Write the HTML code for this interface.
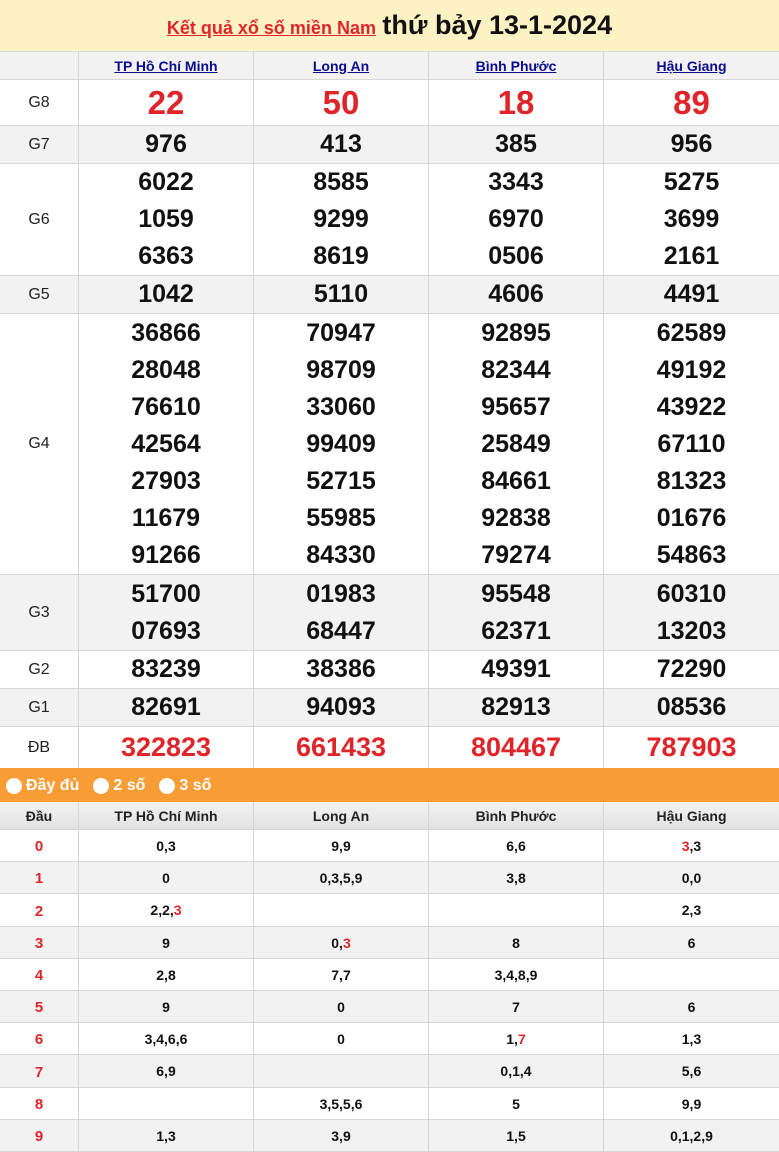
<!DOCTYPE html>
<html><head><meta charset="utf-8"><style>
*{margin:0;padding:0;box-sizing:border-box}
body{width:779px;height:1152px;overflow:hidden;background:#fff;font-family:"Liberation Sans",Arial,sans-serif}
.hd{height:52px;background:#fdf2c4;text-align:center;line-height:50px;border-bottom:1px solid #ddd}
.hd a{color:#e0252a;font-size:18px;font-weight:bold;text-decoration:underline}
.hd b{font-size:27px;color:#111;margin-left:2px}
.r{display:flex;border-bottom:1px solid #d6d6d6}
.r>div{border-right:1px solid #d6d6d6;text-align:center;display:flex;flex-direction:column;justify-content:center}
.r>div:last-child{border-right:none}
.c0{width:79px}.c1{width:175px}.c2{width:175px}.c3{width:175px}.c4{width:175px}
.g{background:#f2f2f2}
.lb{font-size:16px;color:#222}
.n{font-size:25px;font-weight:bold;color:#111;line-height:37px}
.red{color:#e0252a}
.h a{color:#0b0b8e;font-size:14px;font-weight:bold;text-decoration:underline}
.bar{height:34px;background:#f89c35;display:flex;align-items:center;padding-left:6px;color:#fff;font-weight:bold;font-size:16px;padding-top:2px}
.bar span{display:inline-block;width:16px;height:16px;border-radius:50%;background:#fff;margin-right:4px;vertical-align:-3px}
.bar i{font-style:normal;margin-right:14px}
.lh{background:linear-gradient(#f3f3f3,#e2e2e2);font-weight:bold;font-size:14px;color:#222}
.l{font-size:14px;font-weight:bold;color:#111}
.l .d{color:#e0252a;font-size:15px;padding-top:2px}
</style></head><body>
<div class="hd"><a>Kết quả xổ số miền Nam</a> <b>thứ bảy 13-1-2024</b></div>
<div class="r g h" style="height:28px"><div class="c0"></div><div class="c1"><a>TP Hồ Chí Minh</a></div><div class="c2"><a>Long An</a></div><div class="c3"><a>Bình Phước</a></div><div class="c4"><a>Hậu Giang</a></div></div>
<div class="r" style="height:46px"><div class="c0 lb">G8</div><div class="c1 n red" style="font-size:33px">22</div><div class="c2 n red" style="font-size:33px">50</div><div class="c3 n red" style="font-size:33px">18</div><div class="c4 n red" style="font-size:33px">89</div></div>
<div class="r g" style="height:38px"><div class="c0 lb">G7</div><div class="c1 n">976</div><div class="c2 n">413</div><div class="c3 n">385</div><div class="c4 n">956</div></div>
<div class="r" style="height:112px"><div class="c0 lb">G6</div><div class="c1 n">6022<br>1059<br>6363</div><div class="c2 n">8585<br>9299<br>8619</div><div class="c3 n">3343<br>6970<br>0506</div><div class="c4 n">5275<br>3699<br>2161</div></div>
<div class="r g" style="height:38px"><div class="c0 lb">G5</div><div class="c1 n">1042</div><div class="c2 n">5110</div><div class="c3 n">4606</div><div class="c4 n">4491</div></div>
<div class="r" style="height:261px"><div class="c0 lb">G4</div><div class="c1 n">36866<br>28048<br>76610<br>42564<br>27903<br>11679<br>91266</div><div class="c2 n">70947<br>98709<br>33060<br>99409<br>52715<br>55985<br>84330</div><div class="c3 n">92895<br>82344<br>95657<br>25849<br>84661<br>92838<br>79274</div><div class="c4 n">62589<br>49192<br>43922<br>67110<br>81323<br>01676<br>54863</div></div>
<div class="r g" style="height:76px"><div class="c0 lb">G3</div><div class="c1 n">51700<br>07693</div><div class="c2 n">01983<br>68447</div><div class="c3 n">95548<br>62371</div><div class="c4 n">60310<br>13203</div></div>
<div class="r" style="height:38px"><div class="c0 lb">G2</div><div class="c1 n">83239</div><div class="c2 n">38386</div><div class="c3 n">49391</div><div class="c4 n">72290</div></div>
<div class="r g" style="height:38px"><div class="c0 lb">G1</div><div class="c1 n">82691</div><div class="c2 n">94093</div><div class="c3 n">82913</div><div class="c4 n">08536</div></div>
<div class="r" style="height:41px;border-bottom:none"><div class="c0 lb">ĐB</div><div class="c1 n red" style="font-size:27px">322823</div><div class="c2 n red" style="font-size:27px">661433</div><div class="c3 n red" style="font-size:27px">804467</div><div class="c4 n red" style="font-size:27px">787903</div></div>
<div class="bar"><span></span><i>Đầy đủ</i><span></span><i>2 số</i><span></span><i>3 số</i></div>
<div class="r lh" style="height:28px"><div class="c0">Đầu</div><div class="c1">TP Hồ Chí Minh</div><div class="c2">Long An</div><div class="c3">Bình Phước</div><div class="c4">Hậu Giang</div></div>
<div class="r l" style="height:32px"><div class="c0 d">0</div><div class="c1">0,3</div><div class="c2">9,9</div><div class="c3">6,6</div><div class="c4"><span><span class="red">3</span>,3</span></div></div>
<div class="r l g" style="height:32px"><div class="c0 d">1</div><div class="c1">0</div><div class="c2">0,3,5,9</div><div class="c3">3,8</div><div class="c4">0,0</div></div>
<div class="r l" style="height:33px"><div class="c0 d">2</div><div class="c1"><span>2,2,<span class="red">3</span></span></div><div class="c2"></div><div class="c3"></div><div class="c4">2,3</div></div>
<div class="r l g" style="height:32px"><div class="c0 d">3</div><div class="c1">9</div><div class="c2"><span>0,<span class="red">3</span></span></div><div class="c3">8</div><div class="c4">6</div></div>
<div class="r l" style="height:32px"><div class="c0 d">4</div><div class="c1">2,8</div><div class="c2">7,7</div><div class="c3">3,4,8,9</div><div class="c4"></div></div>
<div class="r l g" style="height:32px"><div class="c0 d">5</div><div class="c1">9</div><div class="c2">0</div><div class="c3">7</div><div class="c4">6</div></div>
<div class="r l" style="height:32px"><div class="c0 d">6</div><div class="c1">3,4,6,6</div><div class="c2">0</div><div class="c3"><span>1,<span class="red">7</span></span></div><div class="c4">1,3</div></div>
<div class="r l g" style="height:33px"><div class="c0 d">7</div><div class="c1">6,9</div><div class="c2"></div><div class="c3">0,1,4</div><div class="c4">5,6</div></div>
<div class="r l" style="height:32px"><div class="c0 d">8</div><div class="c1"></div><div class="c2">3,5,5,6</div><div class="c3">5</div><div class="c4">9,9</div></div>
<div class="r l g" style="height:32px"><div class="c0 d">9</div><div class="c1">1,3</div><div class="c2">3,9</div><div class="c3">1,5</div><div class="c4">0,1,2,9</div></div>
</body></html>
